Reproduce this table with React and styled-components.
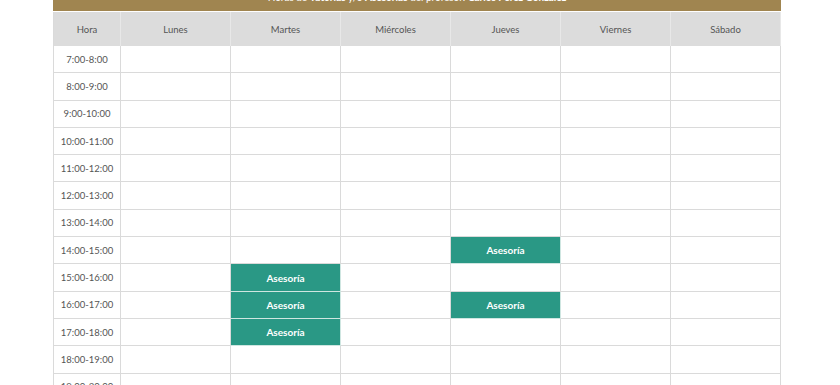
import React from "react";
import styled, { createGlobalStyle } from "styled-components";

const GlobalStyle = createGlobalStyle`
  body {
    margin: 0;
    background: #ffffff;
    font-family: Lato, "Open Sans", sans-serif;
    overflow: hidden;
  }
`;

const Page = styled.div`
  width: 728px;
  margin: -13px 0 0 53px;
`;

const Banner = styled.div`
  height: 24px;
  background: #a08550;
  color: #ffffff;
  font-size: 10px;
  line-height: 21px;
  text-align: center;

  b {
    font-weight: 700;
  }
`;

const Grid = styled.div`
  display: grid;
  grid-template-columns: 67px repeat(6, 1fr);
  grid-template-rows: 34px;
  grid-auto-rows: 27.3px;
  border-left: 1px solid #dadada;
  margin-top: 1px;
`;

const HeadCell = styled.div`
  background: #dcdcdc;
  border-right: 1px solid #e8e8e8;
  display: flex;
  align-items: center;
  justify-content: center;
  font-size: 9.5px;
  color: #555555;
`;

const Cell = styled.div`
  border-right: 1px solid #dadada;
  border-bottom: 1px solid #dadada;
  box-sizing: border-box;
  display: flex;
  align-items: center;
  justify-content: center;
  font-size: 9.5px;
  color: #555555;
  background: ${(p) => (p.$busy ? "#2a9885" : "#ffffff")};
  ${(p) => p.$busy && "border-right-color: #cfe6e1; border-bottom-color: #cfe6e1;"}
`;

const Busy = styled.span`
  color: #ffffff;
  font-weight: 700;
  font-size: 10px;
`;

const days = ["Lunes", "Martes", "Miércoles", "Jueves", "Viernes", "Sábado"];
const hours = [7, 8, 9, 10, 11, 12, 13, 14, 15, 16, 17, 18, 19];
const slots = {
  "Martes-15": true,
  "Martes-16": true,
  "Martes-17": true,
  "Jueves-14": true,
  "Jueves-16": true,
};

export default function App() {
  return (
    <Page>
      <GlobalStyle />
      <Banner>
        Horas de <b>Tutorías</b> y/o <b>Asesorías</b> del profesor: <b>Carlos Pérez González</b>
      </Banner>
      <Grid>
        <HeadCell>Hora</HeadCell>
        {days.map((d) => (
          <HeadCell key={d}>{d}</HeadCell>
        ))}
        {hours.map((h) => (
          <React.Fragment key={h}>
            <Cell>{`${h}:00-${h + 1}:00`}</Cell>
            {days.map((d) => {
              const busy = slots[`${d}-${h}`];
              return (
                <Cell key={d} $busy={busy}>
                  {busy && <Busy>Asesoría</Busy>}
                </Cell>
              );
            })}
          </React.Fragment>
        ))}
      </Grid>
    </Page>
  );
}
